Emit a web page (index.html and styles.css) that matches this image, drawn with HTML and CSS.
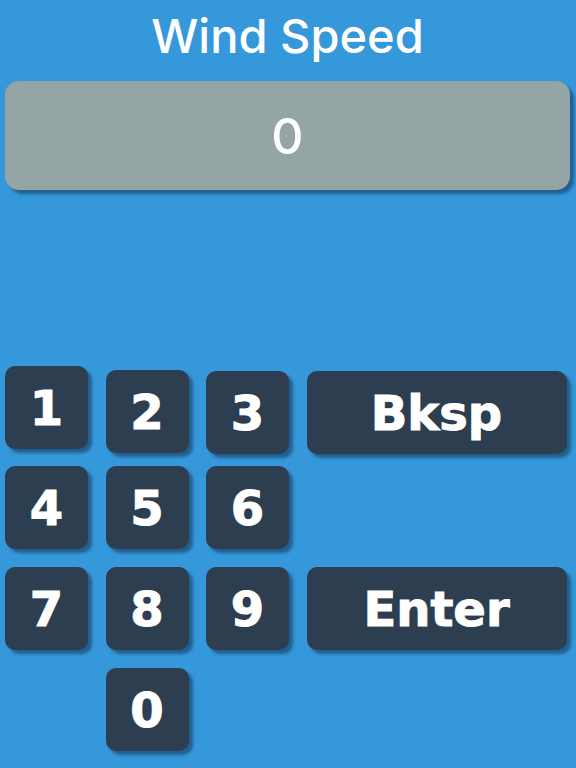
FILE: index.html
```html
<!DOCTYPE html>
<html lang="en">
<head>
  <meta charset="utf-8" />
  <meta name="viewport" content="width=device-width, initial-scale=1" />
  <title>Wind Speed</title>
  <link rel="stylesheet" href="styles.css">
</head>
<body>
  <div class="entry-screen">
    <h1 class="entry-title">Wind Speed</h1>

    <div class="entry-display" id="entry-value">0</div>

    <div class="keypad">
      <button class="key row-1">1</button>
      <button class="key row-1 key-2">2</button>
      <button class="key row-1 key-3">3</button>
      <button class="key row-1 key-wide key-3">Bksp</button>

      <button class="key row-2">4</button>
      <button class="key row-2">5</button>
      <button class="key row-2">6</button>

      <button class="key row-3">7</button>
      <button class="key row-3">8</button>
      <button class="key row-3">9</button>
      <button class="key row-3 key-wide">Enter</button>

      <button class="key key-0">0</button>
    </div>
  </div>
</body>
</html>
```

FILE: styles.css
```css
html, body {
  margin: 0;
  padding: 0;
}

body {
  background-color: #3498db;
  font-family: Inter, 'Noto Sans', sans-serif;
  color: #fff;
}

.entry-screen {
  height: 100vh;
  box-sizing: border-box;
  padding: 0 6px 19px 5px;
  display: flex;
  flex-direction: column;
}

.entry-title {
  margin: 0;
  font-size: 47px;
  font-weight: 500;
  line-height: 72px;
  text-align: center;
}

.entry-display {
  margin-top: 9px;
  height: 109px;
  border-radius: 14px;
  background-color: #95a5a6;
  box-shadow: 4px 4px 3px rgba(20, 50, 80, 0.55);
  display: flex;
  align-items: center;
  justify-content: center;
  font-size: 50px;
  font-weight: 500;
}

.keypad {
  margin-top: auto;
  display: grid;
  grid-template-columns: 83px 83px 83px 260px;
  grid-template-rows: repeat(4, 83px);
  column-gap: 17.5px;
  row-gap: 17px;
}

.key {
  height: 83px;
  align-self: start;
  border: none;
  border-radius: 10px;
  background-color: #2c3e50;
  color: #fff;
  font-family: 'DejaVu Sans', 'Liberation Sans', sans-serif;
  font-size: 48px;
  font-weight: bold;
  -webkit-text-stroke: 1px #fff;
  padding: 0;
  box-shadow: 4px 4px 3px rgba(20, 50, 80, 0.55);
  cursor: pointer;
}

.row-1 { grid-row: 1; }
.row-2 { grid-row: 2; }
.row-3 { grid-row: 3; margin-top: 1px; }

/* first row sits a little uneven */
.key-2 { margin-top: 4px; }
.key-3 { margin-top: 5px; }

.key-wide {
  grid-column: 4;
}

.key-0 {
  grid-column: 2;
  grid-row: 4;
  margin-top: 2px;
}
```
